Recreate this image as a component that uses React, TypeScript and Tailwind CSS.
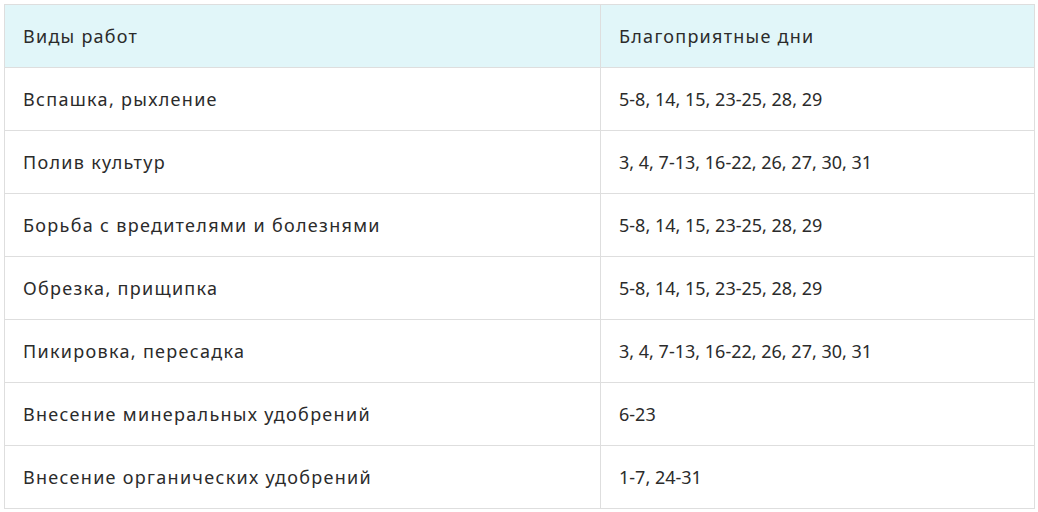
const rows: [string, string][] = [
  ["Вспашка, рыхление", "5-8, 14, 15, 23-25, 28, 29"],
  ["Полив культур", "3, 4, 7-13, 16-22, 26, 27, 30, 31"],
  ["Борьба с вредителями и болезнями", "5-8, 14, 15, 23-25, 28, 29"],
  ["Обрезка, прищипка", "5-8, 14, 15, 23-25, 28, 29"],
  ["Пикировка, пересадка", "3, 4, 7-13, 16-22, 26, 27, 30, 31"],
  ["Внесение минеральных удобрений", "6-23"],
  ["Внесение органических удобрений", "1-7, 24-31"],
];

export default function App() {
  return (
    <div className="bg-white p-[4px] font-['Noto_Sans',sans-serif] text-[18px] text-[#2b2b2b]">
      <table className="w-[1031px] table-fixed border-collapse">
        <colgroup>
          <col className="w-[596px]" />
          <col />
        </colgroup>
        <thead>
          <tr className="h-[63px] bg-[#e1f6f9]">
            <th className="border border-[#dedede] px-[18px] text-left font-normal tracking-[1.25px]">Виды работ</th>
            <th className="border border-[#dedede] px-[18px] text-left font-normal tracking-[1.25px]">Благоприятные дни</th>
          </tr>
        </thead>
        <tbody>
          {rows.map(([work, days]) => (
            <tr key={work} className="h-[63px]">
              <td className="border border-[#dedede] px-[18px] tracking-[1.3px]">{work}</td>
              <td className="border border-[#dedede] px-[18px]">{days}</td>
            </tr>
          ))}
        </tbody>
      </table>
    </div>
  );
}
